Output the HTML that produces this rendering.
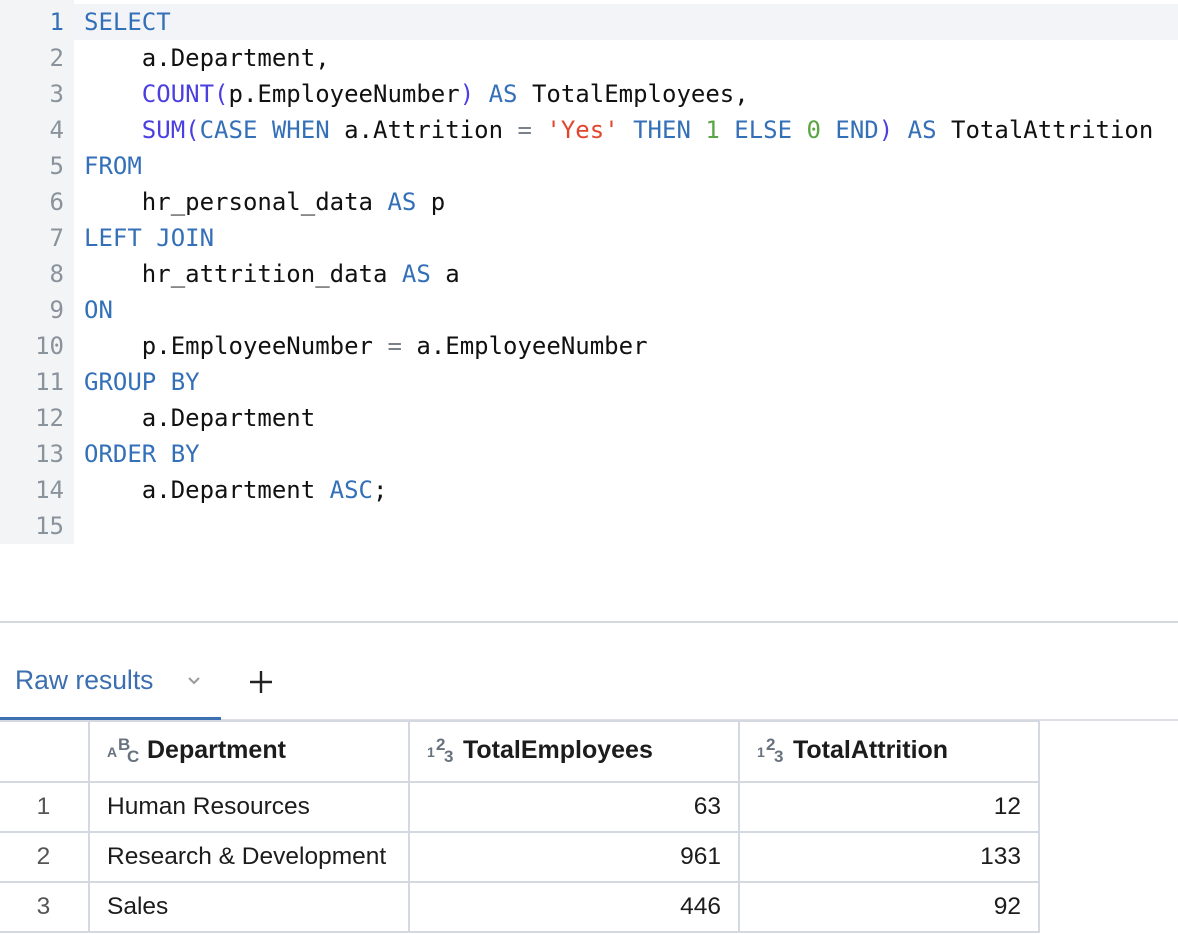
<!DOCTYPE html>
<html><head><meta charset="utf-8"><style>
*{margin:0;padding:0;box-sizing:border-box}
body{width:1178px;height:934px;background:#fff;overflow:hidden;position:relative;font-family:"Liberation Sans",sans-serif}
.gut{position:absolute;left:0;top:0;width:74px;height:544px;background:#f3f4f6}
.code{position:absolute;left:0;top:4px;width:1178px;font-family:"DejaVu Sans Mono","Liberation Mono",monospace;font-size:24px;line-height:36px;color:#111}
.ln{height:36px;white-space:pre;position:relative}
.ln .n{display:inline-block;width:64px;text-align:right;color:#8a939c;margin-right:20px}
.hl{position:absolute;left:74px;top:4px;width:1104px;height:36px;background:#f3f4f8}
.k{color:#3470b8}.f{color:#4b3fe0}.s{color:#e2452d}.d{color:#5aa645}.o{color:#7a8088}
.sep{position:absolute;left:0;top:621px;width:1178px;height:2px;background:#d4d9e0}
.tab{position:absolute;left:15px;top:665px;font-size:26.5px;color:#3c6fb0}
.chev{position:absolute;left:186px;top:673px}
.plus{position:absolute;left:248px;top:669px}
.ul{position:absolute;left:0;top:717px;width:221px;height:4px;background:#3c70b2}
.hline{position:absolute;left:221px;top:719px;width:957px;height:2px;background:#dde0e5}
table{position:absolute;left:-1px;top:720px;border-collapse:collapse;font-size:24.5px;color:#1c1c1c}
td,th{border:2px solid #d4d9e1;height:50px;padding:0 17px}
th{height:61px;text-align:left;font-weight:bold;font-size:25px}
td.r{text-align:right}
td.i{text-align:center;color:#555;padding:0}
.ic{position:relative;display:inline-block;width:34px;height:30px;vertical-align:middle;color:#68727e;font-weight:bold;font-size:17px;margin-right:6px;top:-2px}
.ic span{position:absolute}
</style></head><body>
<div class="gut"></div>
<div class="hl"></div>
<div class="code">
<div class="ln"><span class="n" style="color:#3470b8">1</span><span class="k">SELECT</span></div>
<div class="ln"><span class="n">2</span>    a.Department,</div>
<div class="ln"><span class="n">3</span>    <span class="f">COUNT(</span>p.EmployeeNumber<span class="f">)</span> <span class="k">AS</span> TotalEmployees,</div>
<div class="ln"><span class="n">4</span>    <span class="f">SUM(</span><span class="k">CASE WHEN</span> a.Attrition <span class="o">=</span> <span class="s">'Yes'</span> <span class="k">THEN</span> <span class="d">1</span> <span class="k">ELSE</span> <span class="d">0</span> <span class="k">END</span><span class="f">)</span> <span class="k">AS</span> TotalAttrition</div>
<div class="ln"><span class="n">5</span><span class="k">FROM</span></div>
<div class="ln"><span class="n">6</span>    hr_personal_data <span class="k">AS</span> p</div>
<div class="ln"><span class="n">7</span><span class="k">LEFT JOIN</span></div>
<div class="ln"><span class="n">8</span>    hr_attrition_data <span class="k">AS</span> a</div>
<div class="ln"><span class="n">9</span><span class="k">ON</span></div>
<div class="ln"><span class="n">10</span>    p.EmployeeNumber <span class="o">=</span> a.EmployeeNumber</div>
<div class="ln"><span class="n">11</span><span class="k">GROUP BY</span></div>
<div class="ln"><span class="n">12</span>    a.Department</div>
<div class="ln"><span class="n">13</span><span class="k">ORDER BY</span></div>
<div class="ln"><span class="n">14</span>    a.Department <span class="k">ASC</span>;</div>
<div class="ln"><span class="n">15</span></div>
</div>
<div class="sep"></div>
<div class="tab">Raw results</div>
<svg class="chev" width="16" height="16" viewBox="0 0 16 16"><path d="M3 5l5 5 5-5" fill="none" stroke="#9a9a9a" stroke-width="2"/></svg>
<svg class="plus" width="26" height="26" viewBox="0 0 26 26"><path d="M13 2v22M2 13h22" stroke="#222" stroke-width="2.4"/></svg>
<div class="hline"></div>
<div class="ul"></div>
<table>
<tr><th style="width:90px;border-left:none"></th>
<th style="width:320px"><span class="ic"><span style="left:0;top:9px;font-size:14px">A</span><span style="left:11px;top:0">B</span><span style="left:20px;top:12px">C</span></span>Department</th>
<th style="width:330px"><span class="ic" style="width:30px"><span style="left:0;top:9px;font-size:14px">1</span><span style="left:9px;top:0">2</span><span style="left:17px;top:12px">3</span></span>TotalEmployees</th>
<th style="width:300px"><span class="ic" style="width:30px"><span style="left:0;top:9px;font-size:14px">1</span><span style="left:9px;top:0">2</span><span style="left:17px;top:12px">3</span></span>TotalAttrition</th></tr>
<tr><td class="i" style="border-left:none">1</td><td>Human Resources</td><td class="r">63</td><td class="r">12</td></tr>
<tr><td class="i" style="border-left:none">2</td><td>Research &amp; Development</td><td class="r">961</td><td class="r">133</td></tr>
<tr><td class="i" style="border-left:none">3</td><td>Sales</td><td class="r">446</td><td class="r">92</td></tr>
</table>
</body></html>
